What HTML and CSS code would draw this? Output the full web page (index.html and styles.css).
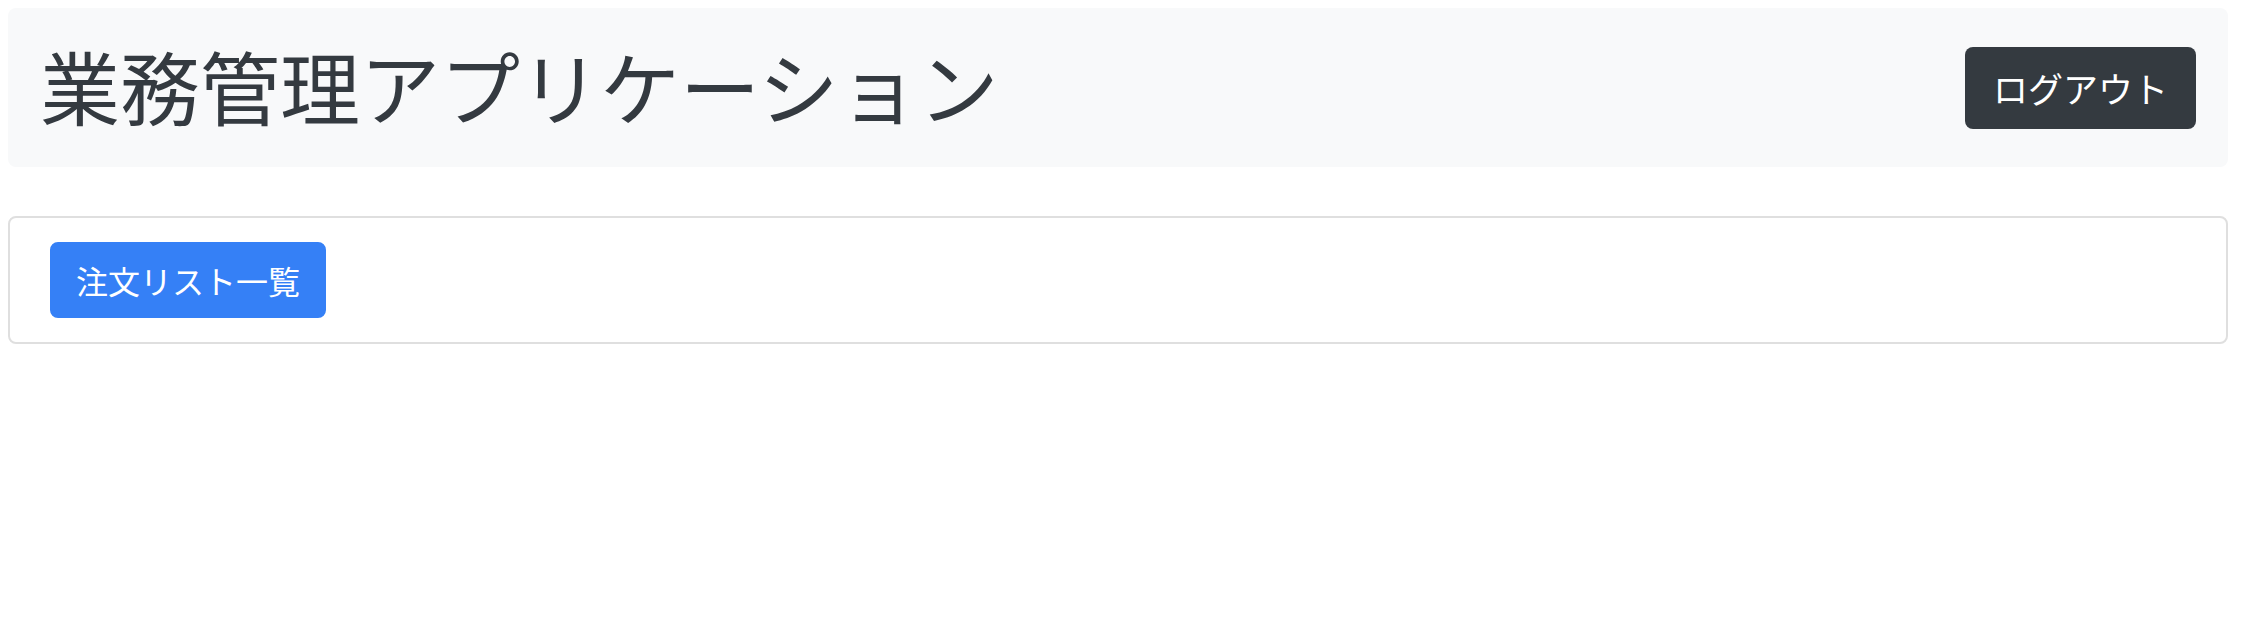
FILE: index.html
```html
<!DOCTYPE html>
<html lang="ja">
<head>
<meta charset="utf-8">
<title>業務管理アプリケーション</title>
<link rel="stylesheet" href="styles.css">
</head>
<body>
<div class="page">
  <header class="navbar">
    <h1 class="brand">業務管理アプリケーション</h1>
    <button class="btn btn-dark" type="button">ログアウト</button>
  </header>
  <section class="card">
    <div class="card-body">
      <button class="btn btn-primary" type="button">注文リスト一覧</button>
    </div>
  </section>
</div>
</body>
</html>
```

FILE: styles.css
```css
html, body {
  margin: 0;
  padding: 0;
  background: #ffffff;
}
body {
  font-family: "Noto Sans CJK JP", "Noto Sans", sans-serif;
  color: #343a40;
}
.page {
  width: 2220px;
  margin: 8px;
}
.navbar {
  display: flex;
  align-items: center;
  justify-content: space-between;
  height: 159px;
  box-sizing: border-box;
  padding: 16px 32px;
  background: #f8f9fa;
  border-radius: 8px;
}
.brand {
  margin: 0;
  font-size: 80px;
  font-weight: 400;
  line-height: 96px;
  color: #343a40;
  padding-bottom: 8px;
}
.btn {
  font-family: "Noto Sans CJK JP", "Noto Sans", sans-serif;
  font-weight: 400;
  border-radius: 8px;
  cursor: pointer;
  box-sizing: border-box;
  margin: 0;
}
.btn-dark {
  font-size: 35px;
  line-height: 54px;
  padding: 14px 28px;
  background: #343a40;
  border: 0;
  color: #ffffff;
}
.btn-primary {
  font-size: 32px;
  line-height: 48px;
  padding: 12px 24px;
  background: #3580f6;
  border: 2px solid #3580f6;
  color: #ffffff;
}
.card {
  margin-top: 49px;
  border: 2px solid #dfdfdf;
  border-radius: 8px;
  background: #ffffff;
}
.card-body {
  padding: 24px 40px;
  display: flex;
}
```
